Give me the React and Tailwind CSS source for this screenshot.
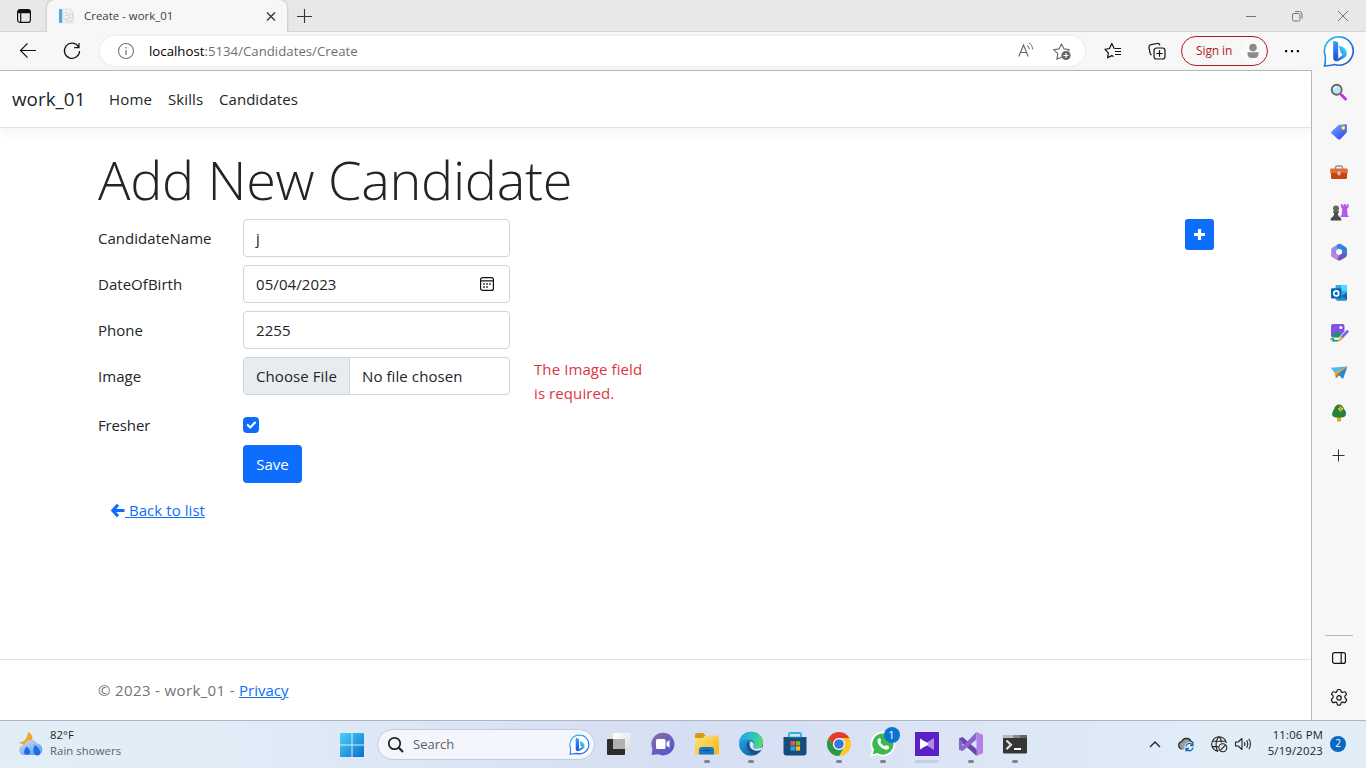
import React from 'react';

const Svg = ({ s = 24, box = 24, className = '', children }) => (
  <svg width={s} height={s} viewBox={`0 0 ${box} ${box}`} fill="none" className={`block shrink-0 ${className}`}>
    {children}
  </svg>
);

/* ---------- browser chrome ---------- */

function TitleBar() {
  return (
    <div className="flex h-8 shrink-0 bg-[#e8e8e8]">
      <div className="flex w-[47px] items-center justify-center border-b border-[#d6d6d6] pl-[1px]">
        <Svg s={16} box={16}>
          <rect x="1.6" y="1.6" width="12.8" height="12.8" rx="2.5" stroke="#111" strokeWidth="1.2" />
          <path d="M1.6 4.5V4a2.4 2.4 0 0 1 2.4-2.4h8A2.4 2.4 0 0 1 14.4 4v1.2H1.6z" fill="#111" />
          <path d="M4.7 5v9" stroke="#111" strokeWidth="1.2" />
        </Svg>
      </div>
      <div className="flex w-[240px] items-center rounded-t-lg bg-[#f7f7f7] pl-[11px] shadow-[0_0_3px_rgba(0,0,0,0.25)] [clip-path:inset(0_-4px_0_-4px)]">
        <Svg s={16} box={16}>
          <path d="M5 1h7l3 3v11H5z" fill="#f0f2f6" stroke="#d3d8e0" strokeWidth=".7" />
          <path d="M7 5h3M7 7.5h3M11 6h4v4h-4zM6 11h5M8 13h6" stroke="#c3cad6" strokeWidth=".8" />
          <path d="M1 1h3v14H1z" fill="#5aa6d8" />
          <path d="M4 1.3h1.3V15H4z" fill="#d5e3ee" />
        </Svg>
        <span className="ml-[10px] text-[11.4px] leading-4 tracking-[0.03px] whitespace-pre text-[#3b3b3b]">Create - work_01</span>
        <Svg s={12} box={12} className="mr-[10px] ml-auto">
          <path d="M2 2.500l8 8M10 2.500l-8 8" stroke="#333" strokeWidth="1.300" />
        </Svg>
      </div>
      <div className="flex flex-1 items-center border-b border-[#d6d6d6] pl-[9px]">
        <Svg s={16} box={16}>
          <path d="M8.500 1v14M1 8.500h15" stroke="#333" strokeWidth="1.100" />
        </Svg>
        <div className="ml-auto flex items-center gap-[34px] pr-[17px]">
          <Svg s={12} box={12}><path d="M1 6.5h10" stroke="#777" /></Svg>
          <Svg s={12} box={12}>
            <rect x="1.500" y="3.500" width="7.500" height="7.500" rx="1.500" stroke="#777" />
            <path d="M4 1.500h4.500a2.500 2.500 0 0 1 2.500 2.500v4.500" stroke="#777" />
          </Svg>
          <Svg s={12} box={12}><path d="M1 1l10 10M11 1L1 11" stroke="#777" /></Svg>
        </div>
      </div>
    </div>
  );
}

function BingBubble({ s = 32 }) {
  return (
    <Svg s={s} box={32}>
      <defs>
        <linearGradient id="bubble" x1="4" y1="2" x2="27" y2="30" gradientUnits="userSpaceOnUse">
          <stop stopColor="#2cc3f5" /><stop offset=".55" stopColor="#2a7de8" /><stop offset="1" stopColor="#2453c9" />
        </linearGradient>
        <linearGradient id="bstem" x1="12" y1="6" x2="12" y2="26" gradientUnits="userSpaceOnUse">
          <stop stopColor="#3aa0f4" /><stop offset=".5" stopColor="#2a74ea" /><stop offset="1" stopColor="#1c50cf" />
        </linearGradient>
        <linearGradient id="bbowl" x1="12" y1="24" x2="23" y2="16" gradientUnits="userSpaceOnUse">
          <stop stopColor="#1f58d8" /><stop offset=".6" stopColor="#2e9bf0" /><stop offset="1" stopColor="#3ccdf2" />
        </linearGradient>
      </defs>
      <path d="M16 1.800A14.200 14.200 0 1 1 11.600 29.500C8 30.300 5 30.700 1.600 30.900C2.600 28 2.400 25 2.300 21A14.200 14.200 0 0 1 16 1.800z" fill="#fff" stroke="url(#bubble)" strokeWidth="1.700" />
      <path d="M10.200 7q0-1.400 1.400-1l2.400.8q1.200.5 1.200 1.800V23l-2.500 2.800q-2.500-.5-2.500-3z" fill="url(#bstem)" />
      <path d="M16.300 12.200q-.6-1.400.8-1.100c4 1.100 6.700 3.500 6.700 7.300 0 2-.9 3.400-2.600 4.400l-5.200 2.900c-2.800 1.400-5.300 0-5.700-2.300 1.500 1 3.200.9 4.700 0l4.200-3.200q.8-.8-.2-1.400l-1.200-.7z" fill="url(#bbowl)" />
    </Svg>
  );
}

function Toolbar() {
  return (
    <div className="flex h-[38px] shrink-0 items-center bg-[#f7f7f7]">
      <Svg s={18} box={18} className="ml-[19px]">
        <path d="M17 8.500H1.500M8.500 1.300L1.500 8.500l7 7.200" stroke="#111" strokeWidth="1.200" />
      </Svg>
      <Svg s={18} box={18} className="ml-[26px]">
        <path d="M15.600 5A7.600 7.600 0 1 0 16.600 9M16 1v4.700h-4.800" stroke="#111" strokeWidth="1.200" />
      </Svg>
      <div className="ml-[19px] flex h-[30px] w-[985px] items-center rounded-full bg-white shadow-[0_0_3px_rgba(0,0,0,0.1)]">
        <Svg s={18} box={18} className="ml-[17px]">
          <circle cx="9" cy="9" r="7.500" stroke="#777" strokeWidth="1.100" />
          <path d="M9 8v5M9 5v1.400" stroke="#777" strokeWidth="1.300" />
        </Svg>
        <span className="ml-[14px] pt-px text-[13.200px] tracking-[0.020px] text-[#6f6f6f]">
          <span className="text-black">localhost</span>:5134/Candidates/Create
        </span>
        <Svg s={18} box={18} className="mr-[17px] ml-auto">
          <path d="M1.800 14.500L6.500 3l4.700 11.500M3.400 10.500h6.200" stroke="#666" strokeWidth="1.100" />
          <path d="M10 3.300c1.500 1 2.200 2.400 2.200 4.100M12 1c2.400 1.400 3.500 3.500 3.500 6.400" stroke="#666" />
        </Svg>
        <Svg s={20} box={20} className="mr-[13px]">
          <path d="M9.800 16l-4.900 2.200.9-5.600L1.500 8.700l5.500-.8 2.500-5 2.500 5 5.500.8-2 2" stroke="#666" strokeWidth="1.100" strokeLinejoin="round" />
          <circle cx="14" cy="14.500" r="4.600" fill="#666" />
          <path d="M14 12v5M11.500 14.500h5" stroke="#fff" strokeWidth="1.100" />
        </Svg>
      </div>
      <Svg s={18} box={18} className="ml-[19px]">
        <path d="M10.800 6.500h-.6L7.800 1.500 5.500 6.500l-4.500.8L4.300 10.800l-.7 5 4.200-2.200 1.800.9" stroke="#111" strokeWidth="1.200" strokeLinejoin="round" />
        <path d="M11 6.500h6M11 9.500h6M11 12.500h6" stroke="#111" strokeWidth="1.200" />
      </Svg>
      <Svg s={18} box={18} className="ml-[26px]">
        <path d="M3.600 13A2.500 2.500 0 0 1 2 10.800L1 5.500A2.500 2.500 0 0 1 3 2.700l6.200-1.200a2.500 2.500 0 0 1 2.800 1.900" stroke="#111" strokeWidth="1.200" />
        <rect x="6" y="6" width="11" height="11" rx="2.500" stroke="#111" strokeWidth="1.200" />
        <path d="M11.500 8.300v6.400M8.300 11.500h6.400" stroke="#111" strokeWidth="1.200" />
      </Svg>
      <div className="ml-[15px] flex h-[30px] w-[87px] items-center rounded-full border border-[#ad1a22] pl-[14px] text-[12px] tracking-[-0.100px] text-[#ad1a22]">
        Sign in
        <div className="mr-[2px] ml-auto flex h-6 w-6 items-center justify-center rounded-full bg-[#fafafa]">
          <Svg s={16} box={16}>
            <circle cx="8" cy="4.600" r="3.800" fill="#8b8b8b" />
            <path d="M2.500 9.300h11v1.500a4.300 4.300 0 0 1-4.300 4.200H6.800a4.300 4.300 0 0 1-4.300-4.200z" fill="#8b8b8b" />
          </Svg>
        </div>
      </div>
      <Svg s={16} box={16} className="ml-[16px]">
        <path d="M1 7h2.200v2.200H1zM6.900 7h2.200v2.200H6.900zM12.800 7H15v2.200h-2.200z" fill="#111" />
      </Svg>
      <div className="ml-[23px]"><BingBubble /></div>
    </div>
  );
}

/* ---------- web page ---------- */

function Row({ label, children }) {
  return (
    <div className="mb-2 flex h-[38px] items-center">
      <div className="w-[145px] text-[15px] tracking-[0.030px]">{label}</div>
      {children}
    </div>
  );
}

const field = 'flex h-[38px] w-[267px] items-center overflow-hidden rounded-[4px] border border-[#ced4da] bg-white text-[15px] tracking-[0.090px]';

function Page() {
  return (
    <div className="flex flex-1 flex-col border-t border-r border-[#b9b9b9] bg-white text-[#212529]">
      <nav className="flex h-[57px] shrink-0 items-center border-b border-[#dee2e6] pl-3 shadow-[0_4px_12px_rgba(0,0,0,0.05)]">
        <span className="w-[73px] pt-px text-[18.800px] tracking-[0.050px]">work_01</span>
        <div className="ml-6 flex gap-4 text-[15px]">
          <span className="w-[43px] tracking-[0.200px]">Home</span>
          <span className="w-[35px] tracking-[0.100px]">Skills</span>
          <span className="tracking-[0.050px]">Candidates</span>
        </div>
      </nav>
      <main className="flex flex-1 pt-[20px] pl-[98px]">
        <div className="w-[560px]">
          <h1 className="mb-[4px] h-[67px] text-[54px] leading-[63px] font-light tracking-[-0.300px] whitespace-nowrap">Add New Candidate</h1>
          <Row label="CandidateName"><div className={field}><span className="pl-3">j</span></div></Row>
          <Row label="DateOfBirth">
            <div className={field}>
              <span className="pl-3">05/04/2023</span>
              <Svg s={16} box={16} className="mr-[14px] ml-auto">
                <rect x="1.600" y="1.600" width="12.800" height="12.800" rx="2" stroke="#111" strokeWidth="1.200" />
                <path d="M1.500 4.800h13" stroke="#111" strokeWidth="1.200" />
                <path d="M4.200 7.200h1.600v1.600H4.200zM7.200 7.200h1.600v1.600H7.200zM10.200 7.200h1.600v1.600h-1.600zM4.200 10.200h1.600v1.600H4.200zM7.200 10.200h1.600v1.600H7.200z" fill="#111" />
              </Svg>
            </div>
          </Row>
          <Row label="Phone"><div className={field}><span className="pl-3">2255</span></div></Row>
          <Row label="Image">
            <div className={field}>
              <span className="flex h-full w-[106px] items-center border-r border-[#ced4da] bg-[#e9ecef] pl-3">Choose File</span>
              <span className="pl-[12px]">No file chosen</span>
            </div>
            <div className="ml-6 h-[38px] w-[120px] text-[15px] leading-6 tracking-[0.090px] text-[#dc3545]">The Image field is required.</div>
          </Row>
          <div className="mt-[14px] flex h-8 items-center">
            <div className="w-[145px] text-[15px] tracking-[-0.150px]">Fresher</div>
            <div className="flex h-4 w-4 items-center justify-center rounded-[4px] bg-[#0d6efd]">
              <Svg s={16} box={20}><path d="M6 10l3 3 6-6" stroke="#fff" strokeWidth="2.700" strokeLinecap="round" strokeLinejoin="round" /></Svg>
            </div>
          </div>
          <div className="mt-1 ml-[145px] flex h-[38px] w-[59px] items-center justify-center rounded-[4px] bg-[#0d6efd] text-[15px] text-white">Save</div>
          <a className="mt-[15px] ml-[12px] flex h-6 items-center text-[15px] tracking-[0.060px] whitespace-pre text-[#0d6efd]">
            <Svg s={15} box={15}>
              <path d="M8 1.800L2.800 7.500l5.200 5.700M3 7.500h11.500" stroke="#0d6efd" strokeWidth="3.100" />
            </Svg>
            <span className="underline"> Back to list</span>
          </a>
        </div>
        <div className="mt-[71px] ml-[527px] flex h-[31px] w-[29px] items-center justify-center rounded-[3px] bg-[#0d6efd]">
          <Svg s={13} box={13}><path d="M6.500 1v11M1 6.500h11" stroke="#fff" strokeWidth="3.200" /></Svg>
        </div>
      </main>
      <footer className="flex h-[61px] shrink-0 items-center border-t border-[#dee2e6] pl-[98px] text-[15px] whitespace-pre text-[#6c757d]">
        <span className="w-[141px] tracking-[0.360px]">© 2023 - work_01 - </span>
        <span className="text-[#0d6efd] underline">Privacy</span>
      </footer>
    </div>
  );
}

/* ---------- edge sidebar ---------- */

const sideIcons = [
  <Svg s={18} box={18} key="search">
    <path d="M11.500 12l4 4" stroke="#c22ff0" strokeWidth="3" strokeLinecap="round" />
    <circle cx="6.700" cy="6.700" r="5" fill="#bfe3f8" stroke="#686868" strokeWidth="1.900" />
    <path d="M3.700 6a3.200 3.200 0 0 1 3-2.300" stroke="#fff" />
  </Svg>,
  <Svg s={18} box={18} key="tag">
    <defs><linearGradient id="tag" x1="3" y1="4" x2="12" y2="16" gradientUnits="userSpaceOnUse"><stop stopColor="#64a0ff" /><stop offset="1" stopColor="#3a4cf0" /></linearGradient></defs>
    <path d="M9.500 1.800L16 1.200q1 0 1 1l-.2 6.300q0 .8-.6 1.400l-6 6.300q-1 .9-2 0L1.500 10.500q-.9-1 0-2L8 2.500q.7-.6 1.500-.7z" fill="url(#tag)" />
    <circle cx="13.300" cy="4.900" r="1.800" fill="#fff3b5" stroke="#e6a91c" />
  </Svg>,
  <Svg s={18} box={18} key="toolbox">
    <path d="M5.500 6V4.500A1.500 1.500 0 0 1 7 3h4a1.500 1.500 0 0 1 1.500 1.500V6" stroke="#929292" strokeWidth="1.400" />
    <rect x=".2" y="5.500" width="17.600" height="5" rx="1" fill="#e66a32" />
    <path d="M1 10h16v5a1 1 0 0 1-1 1H2a1 1 0 0 1-1-1z" fill="#c9440f" />
    <path d="M7.400 8.500h3.200v2.800L9 12.800l-1.600-1.500z" fill="#ccc" />
  </Svg>,
  <Svg s={20} box={20} key="chess">
    <path d="M12 2h1.600v1.400h1.300V2h1.800v1.400H18V2h1.500v3.500L18 6.700l.6 6.300 1 1v1h-8.100v-1l1.200-1 .6-6.300L12 5.500z" fill="#b955f2" />
    <circle cx="7" cy="6.500" r="3" fill="#666" />
    <path d="M4 9.300h6v1.400H8.800c.1 2.300.6 3.700 2.500 4.800.7.500 1 1 1 3H1.700c0-2 .3-2.500 1-3 1.900-1.100 2.400-2.500 2.500-4.800H4z" fill="#4b4b4b" />
  </Svg>,
  <Svg s={18} box={18} key="m365">
    <path d="M9 .8L2.500 4.500Q1.200 5.400 1.200 7v6l5.300-3V7.500L12.800 4z" fill="#9b8be8" />
    <path d="M8 1.300Q9.500.4 11 1.300l4.500 2.600Q17 4.800 17 6.600v5.500l-5-2.700V7L6.500 4.200z" fill="#2f83d8" />
    <path d="M16.900 10.500V12q0 1.500-1.300 2.200L11 16.900q-1.800 1-3.400 0L2.500 14q-1.300-.8-1.300-2l5.100-2.500L9 11.700l3-2z" fill="#6d55bd" />
    <path d="M1.200 11v1.500q.1 1 1.300 1.700L7.600 17l1.600-5.300-2.700-1.800z" fill="#bd86da" />
    <path d="M6.300 7.400L9.100 5.900l2.900 1.500v3.200l-2.900 1.600-2.800-1.600z" fill="#f7f7f7" />
  </Svg>,
  <Svg s={18} box={18} key="outlook">
    <rect x="5.500" y="1" width="11.500" height="15" rx="1" fill="#32a9e8" />
    <path d="M11 1h5a1 1 0 0 1 1 1v5h-6z" fill="#50d9ff" /><path d="M17 8.500v7a1.300 1.300 0 0 1-1.300 1.300H6z" fill="#1b8ed6" />
    <path d="M17 8.500v7L11.500 12z" fill="#1267ae" />
    <rect x="1" y="4.300" width="10.500" height="10.200" rx="1.200" fill="#0768b6" />
    <circle cx="6.200" cy="9.400" r="2.500" stroke="#fff" strokeWidth="1.700" />
  </Svg>,
  <Svg s={20} box={20} key="designer">
    <rect x="2" y="1" width="13.500" height="13.500" rx="2" fill="#8551e6" />
    <path d="M3 13.500l4-5q1-1 2 0l4.500 5-3 2H4z" fill="#19956b" /><circle cx="11.800" cy="4.500" r="1.500" fill="#fff" />
    <path d="M0 14.500h16V20H0z" fill="#f7f7f7" />
    <path d="M1.500 16.500c3-2 4 0 2.500 1.200 2.500.6 4-.7 6.500.1" stroke="#158a62" strokeWidth="1.400" />
    <path d="M18.300 8.500l-6 6.400" stroke="#f7f7f7" strokeWidth="4.200" strokeLinecap="round" />
    <path d="M18.300 8.500l-5.500 5.900" stroke="#7068ea" strokeWidth="2.800" strokeLinecap="round" /><path d="M13 13.500q1.200 2.800-1.400 4.300-2 .8-3 .2 1.300-1 1.400-2.500.6-2 3-2z" fill="#f6b52b" />
  </Svg>,
  <Svg s={18} box={18} key="send">
    <path d="M.5 3.800L17.500 2.500 5.300 9.200z" fill="#4cb9f2" />
    <path d="M17.500 2.500L13 15 9 11.300 6 14V8.700z" fill="#2786de" />
    <path d="M17.500 2.500L4.500 8.500 5.700 14.300 7 10.600z" fill="#f3a421" /><path d="M5.700 14.300l3.500-3L7 10z" fill="#c97b16" />
  </Svg>,
  <Svg s={18} box={18} key="tree">
    <path d="M7 12h4v4.500a1 1 0 0 1-1 1H8a1 1 0 0 1-1-1z" fill="#eba22a" />
    <path d="M9 .5c2.500 0 4.300 2 4.800 4.300 1.700 1.600 3.200 4.700 1.600 7-.8 1.100-2 1.700-3.400 1.700H6c-3 0-4.500-2.300-3.700-4.700.4-1.400 1.200-2.600 1.900-3.800C4.700 2.500 6.500.5 9 .5z" fill="#25823d" />
    <path d="M10.500 2.500v5M8 5h5" stroke="#f6b32c" strokeWidth="2" />
    <circle cx="10.500" cy="5" r=".8" fill="#d7661b" />
  </Svg>,
];

function Sidebar() {
  return (
    <div className="flex w-[54px] shrink-0 flex-col items-center bg-[#f7f7f7] pt-[1px]">
      {sideIcons.map((icon, i) => (
        <div key={i} className="flex h-[40.200px] shrink-0 items-center justify-center pt-px">{icon}</div>
      ))}
      <div className="mt-[14px]">
        <Svg s={16} box={16}><path d="M7.500 2.500v12M1.500 8.500h12" stroke="#333" strokeWidth="1" /></Svg>
      </div>
      <div className="mt-auto mb-[14px] h-px w-7 bg-[#b8b8b8]" />
      <Svg s={16} box={16}>
        <rect x="1.600" y="2.600" width="12.800" height="10.800" rx="2" stroke="#111" strokeWidth="1.200" /><path d="M10.200 3v10" stroke="#111" strokeWidth="1.200" />
      </Svg>
      <Svg s={20} box={20} className="mt-[22px] mb-[12px]">
        <path d="M7.900 3.600Q8.300 1.900 8.700 1.700q1.300-.4 2.600 0 .4.200.8 1.900.6 1 1.700.7 1.900-.7 2.300-.4 1 1 1.400 2.400 0 .4-1.400 1.500-.7 1 0 1.900 0 .4 1.400 1.800.2.500 0 .9-.5 1.200-1.400 2.100-.4.300-2.300-.4-1.100-.3-1.700.7-.4 1.900-.8 2.100-1.300.4-2.600 0-.4-.2-.8-2.100-.6-1-1.700-.7-1.900.7-2.300.4-.9-.9-1.400-2.100-.2-.4 0-.9 0-.4 1.400-1.500.7-1 0-2.200 0-.3-1.400-1.500.3-1.400 1.400-2.400.4-.3 2.300.4 1.100.3 1.700-.7z" stroke="#111" strokeWidth="1.200" strokeLinejoin="round" />
        <circle cx="10" cy="9.900" r="2.200" stroke="#111" strokeWidth="1.200" />
      </Svg>
    </div>
  );
}

/* ---------- taskbar ---------- */

function App24({ children, dot, wide }) {
  return (
    <div className="flex h-full w-11 flex-col items-center pt-[10px] pl-px">
      <div className="flex h-[26px] items-center">{children}</div>
      {dot && <div className="mt-[3px] h-[3px] w-[6px] rounded-full bg-[#7c8490]" />}
      {wide && <div className="mt-[3px] h-[3px] w-6 rounded-full bg-[#c5cdde]" />}
    </div>
  );
}

function Taskbar() {
  return (
    <div className="flex h-12 shrink-0 items-center border-t border-[#aeb6c4] bg-linear-to-r from-[#e1edf7] from-15% via-[#d6def3] via-50% to-[#e1edf7] to-90%">
      <div className="flex w-[330px] items-center pl-[18px]">
        <Svg s={26} box={26} className="-mt-[2px]">
          <defs>
            <linearGradient id="cloud" x1="8" y1="9" x2="16" y2="25" gradientUnits="userSpaceOnUse"><stop stopColor="#c3d4ee" /><stop offset="1" stopColor="#6b9df0" /></linearGradient>
          </defs>
          <path d="M10 1c4 1.500 5.700 6 3.500 9.500S6 15.500 1 11.500c5 0 8.500-4 9-10.500z" fill="#f3a51d" />
          <path d="M6 24a5 5 0 0 1 .4-10A6.800 6.800 0 0 1 19 12.500 5.800 5.800 0 0 1 19.500 24z" fill="url(#cloud)" />
          <path d="M8.500 15.500c4.500 3 5.200 8.300.7 8.300s-3.300-5.300-.7-8.300zM17 14c6 4 7 10.500 2.500 10.500S14.300 18.500 17 14z" fill="#176ee8" />
        </Svg>
        <div className="-mt-[3px] ml-[6px] text-[11.300px] leading-[16px] tracking-[0.080px]">
          <div className="text-[#1d1d1d]">82°F</div>
          <div className="text-[#5b6168]">Rain showers</div>
        </div>
      </div>
      <div className="flex w-11 justify-center">
        <Svg s={24} box={24}>
          <defs><linearGradient id="win" x1="0" y1="0" x2="24" y2="24" gradientUnits="userSpaceOnUse"><stop stopColor="#50d0fc" /><stop offset="1" stopColor="#0670ce" /></linearGradient></defs>
          <path d="M0 1a1 1 0 0 1 1-1h10.500v11.500H0zM12.500 0H23a1 1 0 0 1 1 1v10.500H12.500zM0 12.500h11.500V24H1a1 1 0 0 1-1-1zM12.500 12.500H24V23a1 1 0 0 1-1 1H12.500z" fill="url(#win)" />
        </Svg>
      </div>
      <div className="mr-[1px] ml-[3px] flex h-[31px] w-[218px] items-center rounded-full border border-[#c0cae0] bg-[#f3f6fc] pl-[9px]">
        <Svg s={18} box={18}><circle cx="7.500" cy="7.500" r="5.700" stroke="#222" strokeWidth="1.700" /><path d="M11.800 11.800l4.200 4.200" stroke="#222" strokeWidth="2" /></Svg>
        <span className="ml-[8px] text-[13px] text-[#5c5f66]">Search</span>
        <div className="mr-[4px] ml-auto"><BingBubble s={21} /></div>
      </div>
      <App24>
        <Svg s={24} box={24}>
          <defs><linearGradient id="tv" x1="8" y1="0" x2="23" y2="17" gradientUnits="userSpaceOnUse"><stop stopColor="#fff" /><stop offset="1" stopColor="#dedede" /></linearGradient></defs>
          <rect x="0" y="7" width="18" height="16" rx="1" fill="#2d2d2d" /><rect x="6" y="1" width="18" height="16" rx="1" fill="url(#tv)" /><path d="M6 7h12v10H7a1 1 0 0 1-1-1z" fill="#b1b1b1" />
        </Svg>
      </App24>
      <App24>
        <Svg s={24} box={24}>
          <defs><linearGradient id="chat" x1="4" y1="2" x2="18" y2="22" gradientUnits="userSpaceOnUse"><stop stopColor="#8969a8" /><stop offset="1" stopColor="#5158ce" /></linearGradient></defs>
          <path d="M12 .8A11.300 11.300 0 1 1 7.300 22.300L.5 23l.9-6A11.300 11.300 0 0 1 12 .8z" fill="url(#chat)" />
          <rect x="5" y="7" width="9.500" height="10" rx="1.500" fill="#fff" /><path d="M15.500 10.500l3-2.500v8l-3-2.500z" fill="#fff" />
        </Svg>
      </App24>
      <App24 dot>
        <Svg s={26} box={26}>
          <defs><linearGradient id="fold" x1="5" y1="5" x2="18" y2="24" gradientUnits="userSpaceOnUse"><stop stopColor="#ffe07a" /><stop offset="1" stopColor="#f8b91c" /></linearGradient></defs>
          <path d="M1 4a2 2 0 0 1 2-2h6l2.500 2.500V9H1z" fill="#d49a10" />
          <path d="M1 7h8l2-2.500h12a2 2 0 0 1 2 2V22a1.500 1.500 0 0 1-1.500 1.500h-21A1.500 1.500 0 0 1 1 22z" fill="url(#fold)" />
          <path d="M5 23.500V19a3 3 0 0 1 3-3h9a3 3 0 0 1 3 3v4.500z" fill="#1378c8" /><path d="M8.500 19.500h8" stroke="#075592" strokeWidth="1.200" />
        </Svg>
      </App24>
      <App24 dot>
        <Svg s={26} box={26}>
          <defs>
            <linearGradient id="edge1" x1="5" y1="5" x2="25" y2="13" gradientUnits="userSpaceOnUse"><stop stopColor="#2aa9df" /><stop offset=".6" stopColor="#36c9ae" /><stop offset="1" stopColor="#66dd55" /></linearGradient>
            <linearGradient id="edge2" x1="1" y1="11" x2="17" y2="25" gradientUnits="userSpaceOnUse"><stop stopColor="#1da0dd" /><stop offset="1" stopColor="#0d579f" /></linearGradient>
          </defs>
          <circle cx="13" cy="12.800" r="12" fill="url(#edge2)" />
          <path d="M1 13C1 5.500 6.500.8 13 .8c7.200 0 12 5 12 10.500 0 4.300-3 6.300-6.200 6.300-2.800 0-4.300-1-3.600-2.200 2.500-3.500-.5-6.900-4.400-6.900C6.500 8.500 2 10.200 1 13z" fill="url(#edge1)" />
          <path d="M9.500 11c-2.500 6 2 12 8.500 12.300 2.300-.9 4.200-2.400 5.500-4.500-7 2.500-11.500-1.500-9.800-6.300" fill="#144f8f" />
          <path d="M12.500 10.400c3 .7 4 2.700 2.700 5-.4 1.200.8 2 3.500 2.200 2.300 0 4.200-.7 5.500-2.100l-.7 3.300c-5.500 2.600-11.700-.1-12-5.300 0-1.200.3-2.200 1-3.100z" fill="#dfe7f5" />
        </Svg>
      </App24>
      <App24>
        <Svg s={26} box={26}>
          <path d="M7 7V3.500A1.500 1.500 0 0 1 8.500 2h9A1.500 1.500 0 0 1 19 3.500V7" stroke="#2baee8" strokeWidth="1.800" />
          <path d="M1.500 6h23v15.500a3 3 0 0 1-3 3h-17a3 3 0 0 1-3-3z" fill="#174b7c" />
          <path d="M8.500 10.200H13v4.300H8.500z" fill="#ef5a39" /><path d="M13.800 10.200h4.300v4.300h-4.300z" fill="#81bc22" /><path d="M8.500 15.300H13v4.300H8.500z" fill="#20a5eb" /><path d="M13.800 15.300h4.300v4.300h-4.300z" fill="#fabd18" />
          <path d="M7 6h12" stroke="#2baee8" strokeWidth=".8" />
        </Svg>
      </App24>
      <App24 dot>
        <Svg s={26} box={26}>
          <circle cx="13" cy="13" r="12" fill="#fcc62c" />
          <path d="M2.600 7A12 12 0 0 1 23.400 7H13a6 6 0 0 0-5.200 9z" fill="#e33b2e" />
          <path d="M2.600 7A12 12 0 0 0 13 25l5.200-9A6 6 0 0 1 7.800 16z" fill="#279a4b" />
          <circle cx="13" cy="13" r="6" fill="#fff" /><circle cx="13" cy="13" r="4.800" fill="#3478e5" />
        </Svg>
      </App24>
      <App24 dot>
        <div className="relative">
          <Svg s={26} box={26}>
            <path d="M13 1.500A11.500 11.500 0 1 1 7.200 23L1.500 24.500 3 18.800A11.500 11.500 0 0 1 13 1.500z" fill="#3dba4e" stroke="#fff" strokeWidth="1.800" />
            <path d="M8.500 7.500c1-1 1.700-.6 2.200.7.500 1.200.7 1.700-.3 2.800.9 2 2.400 3.400 4.400 4.300.8-.9 1.200-1.400 2.200-.9l2 1c.6.5.1 2.200-1 2.900-1.800 1-4.800-.1-7.500-2.500-2.600-2.500-4-6.200-2-8.300z" fill="#fff" />
          </Svg>
          <div className="absolute -top-[4px] -right-[4px] flex h-4 w-4 items-center justify-center rounded-full bg-[#0875cf] text-[11px] text-white">1</div>
        </div>
      </App24>
      <App24 wide>
        <Svg s={26} box={26}>
          <rect x="1" y="1" width="24" height="24" fill="#5a1fc5" />
          <path d="M6 7.500v11l9-5.500z" fill="#fff" /><path d="M20 7v12l-9.500-6z" fill="#c7b2ed" opacity=".75" /><path d="M10.500 10.300v5.500L15 13z" fill="#fff" />
        </Svg>
      </App24>
      <App24 dot>
        <Svg s={26} box={26}>
          <path d="M1 7.500L4.500 6 19 18.500v6.300L17.500 24 4.700 12.500z" fill="#6b45ae" />
          <path d="M1 7.500l3.500 3v5.300L1 19z" fill="#8864c4" />
          <path d="M1 18.700L18.500 1v7.500L4.500 20z" fill="#8a63cd" />
          <path d="M18.500 1L25 4v18l-6.500 3z" fill="#b281e5" />
        </Svg>
      </App24>
      <App24 dot>
        <Svg s={26} box={26}>
          <rect x="1" y="4" width="24" height="18.500" rx="1.200" fill="#363636" /><path d="M2 4h9v3H1V5a1 1 0 0 1 1-1z" fill="#bbb" /><path d="M11 4h7v3h-7z" fill="#888" /><path d="M18 4h6a1 1 0 0 1 1 1v2h-7z" fill="#666" />
          <path d="M4.500 9.500l4.500 4.300-4.500 4.300" stroke="#ddd" strokeWidth="2.200" /><path d="M12 18h7" stroke="#fff" strokeWidth="2" />
        </Svg>
      </App24>
      <div className="ml-auto flex items-center pr-5">
        <Svg s={12} box={12}><path d="M1 8l5-5 5 5" stroke="#222" strokeWidth="1.400" /></Svg>
        <Svg s={18} box={18} className="-mt-px ml-[16px]">
          <path d="M5 14a3.700 3.700 0 0 1-.3-7.300A5 5 0 0 1 14 6.300 3.700 3.700 0 0 1 16 8" fill="#9b9b9b" stroke="#222" strokeWidth="1.200" /><path d="M5 14l2-2 8-4" stroke="#9b9b9b" strokeWidth="3" />
          <circle cx="12.500" cy="12" r="5" fill="#e1edf7" />
          <path d="M9 11.400a3.700 3.700 0 0 1 6.500-1.700M16 7.500v3h-3M16 12.700a3.700 3.700 0 0 1-6.500 1.700M9 16.500v-3h3" stroke="#176ab9" strokeWidth="1.300" />
        </Svg>
        <Svg s={18} box={18} className="-mt-px ml-[15px]">
          <path d="M8.200 16.500A7.400 7.400 0 1 1 16.400 8M8.200 16.500C5.500 14 5 5.500 9 1.600c1.700 1.500 2.500 3.700 2.600 6M2 6.200h13.800M2 11.600h6" stroke="#222" strokeWidth="1.100" />
          <circle cx="12.800" cy="12.800" r="4" stroke="#222" strokeWidth="1.100" /><path d="M10 15.600l5.600-5.600" stroke="#222" strokeWidth="1.100" />
        </Svg>
        <Svg s={18} box={18} className="-mt-px ml-[6px]">
          <path d="M1.500 7v4h2.700L8 14.500v-11L4.200 7z" stroke="#222" strokeWidth="1.100" strokeLinejoin="round" />
          <path d="M10.300 7c.8 1.300.8 2.700 0 4M12.600 5.300c1.500 2.400 1.500 5 0 7.400M14.800 3.700c2.200 3.500 2.200 7.100 0 10.600" stroke="#222" strokeWidth="1.100" />
        </Svg>
        <div className="-mt-[3px] ml-[13px] w-[58px] text-right text-[11.300px] leading-[16px] tracking-[0.200px] whitespace-nowrap text-[#1c1c1c]">
          <div>11:06 PM</div>
          <div>5/19/2023</div>
        </div>
        <div className="-mt-[2px] ml-[7px] flex h-4 w-4 items-center justify-center rounded-full bg-[#0868c2] text-[10px] text-white">2</div>
      </div>
    </div>
  );
}

export default function App() {
  return (
    <div className="flex h-[768px] w-[1366px] flex-col overflow-hidden bg-[#f7f7f7] font-['Open_Sans','Noto_Sans',sans-serif]">
      <TitleBar />
      <Toolbar />
      <div className="flex min-h-0 flex-1">
        <Page />
        <Sidebar />
      </div>
      <Taskbar />
    </div>
  );
}
